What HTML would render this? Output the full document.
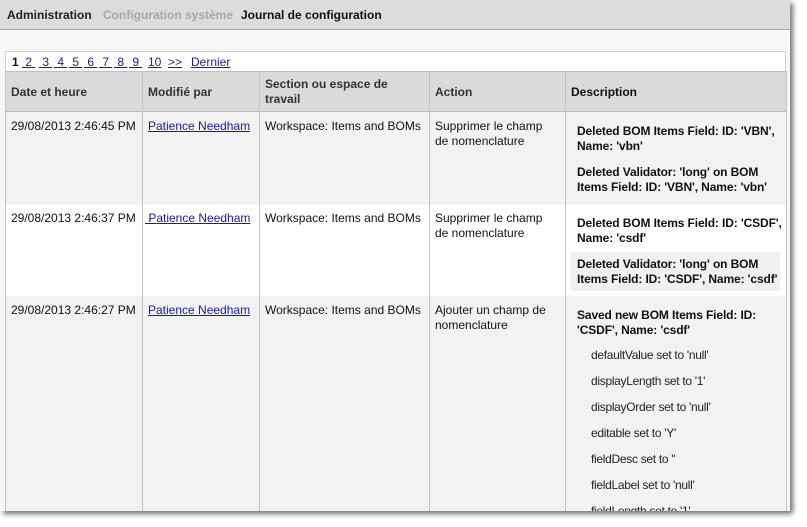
<!DOCTYPE html>
<html><head><meta charset="utf-8"><style>
*{margin:0;padding:0;box-sizing:border-box}
body{width:807px;height:527px;background:#fff;font-family:"Liberation Sans",Arial,sans-serif;font-size:12px;color:#111;position:relative;overflow:hidden}
.win{position:absolute;left:0;top:0;width:790px;height:511px;background:#f7f7f7;overflow:hidden;box-shadow:3px 3px 5px rgba(0,0,0,.55)}
.top{position:absolute;left:0;top:0;width:790px;height:30px;background:#dcdcdc;border-bottom:1px solid #a8a8a8}
.top span{position:absolute;top:8px;font-weight:bold;font-size:12px}
.a{position:absolute;white-space:nowrap}
a{color:#1a1aa6;text-decoration:underline}
.pg{position:absolute;left:5px;top:51px;width:781px;height:21px;background:#fff;border:1px solid #d0d0d0;border-bottom:none}
.hd{position:absolute;left:5px;top:71px;width:781px;height:41px;background:#dadada;border-top:1px solid #c0c0c0;border-bottom:1px solid #b8b8b8}
.row{position:absolute;left:5px;width:781px}
.vl{position:absolute;top:71px;bottom:0;width:1px;background:#c4c4c4}
.h{font-weight:bold;color:#333}
.b{font-weight:bold;line-height:15px;letter-spacing:-0.12px}
.s{font-size:12px;letter-spacing:-0.3px;color:#222}
.p{position:absolute;top:55px}
</style></head><body>
<div class="win">
<div class="top">
<span style="left:7px;color:#222">Administration</span>
<span style="left:103px;color:#a8a8a8">Configuration système</span>
<span style="left:241px;color:#111">Journal de configuration</span>
</div>
<div class="pg"></div>
<b class="p" style="left:12px">1</b>
<a class="p" style="left:22px">&nbsp;2&nbsp;</a>
<a class="p" style="left:39px">&nbsp;3&nbsp;</a>
<a class="p" style="left:54px">&nbsp;4&nbsp;</a>
<a class="p" style="left:69px">&nbsp;5&nbsp;</a>
<a class="p" style="left:84px">&nbsp;6&nbsp;</a>
<a class="p" style="left:99px">&nbsp;7&nbsp;</a>
<a class="p" style="left:114px">&nbsp;8&nbsp;</a>
<a class="p" style="left:129px">&nbsp;9&nbsp;</a>
<a class="p" style="left:148px">10</a>
<a class="p" style="left:168px">&gt;&gt;</a>
<a class="p" style="left:191px">Dernier</a>
<div class="hd"></div>
<div class="row" style="top:112px;height:93px;background:#f2f2f2"></div>
<div class="row" style="top:205px;height:91px;background:#fff"></div>
<div class="row" style="top:296px;height:215px;background:#f2f2f2"></div>
<div style="position:absolute;left:571px;top:252px;width:209px;height:39px;background:#f0f0f0"></div>
<div class="vl" style="left:5px"></div>
<div class="vl" style="left:142px"></div>
<div class="vl" style="left:259px"></div>
<div class="vl" style="left:429px"></div>
<div class="vl" style="left:565px"></div>
<div class="vl" style="left:786px"></div>

<div class="a h" style="left:11px;top:85px">Date et heure</div>
<div class="a h" style="left:148px;top:85px">Modifié par</div>
<div class="a h" style="left:265px;top:77px;line-height:15px">Section ou espace de<br>travail</div>
<div class="a h" style="left:435px;top:85px">Action</div>
<div class="a h" style="left:571px;top:85px;color:#111">Description</div>

<div class="a" style="left:11px;top:119px">29/08/2013 2:46:45 PM</div>
<div class="a" style="left:148px;top:119px"><a>Patience Needham</a></div>
<div class="a" style="left:265px;top:119px">Workspace: Items and BOMs</div>
<div class="a" style="left:435px;top:119px;line-height:15px">Supprimer le champ<br>de nomenclature</div>
<div class="a b" style="left:577px;top:124px">Deleted BOM Items Field: ID: 'VBN',<br>Name: 'vbn'</div>
<div class="a b" style="left:577px;top:165px">Deleted Validator: 'long' on BOM<br>Items Field: ID: 'VBN', Name: 'vbn'</div>

<div class="a" style="left:11px;top:211px">29/08/2013 2:46:37 PM</div>
<div class="a" style="left:145px;top:211px"><a>&nbsp;Patience Needham</a></div>
<div class="a" style="left:265px;top:211px">Workspace: Items and BOMs</div>
<div class="a" style="left:435px;top:211px;line-height:15px">Supprimer le champ<br>de nomenclature</div>
<div class="a b" style="left:577px;top:216px">Deleted BOM Items Field: ID: 'CSDF',<br>Name: 'csdf'</div>
<div class="a b" style="left:577px;top:257px">Deleted Validator: 'long' on BOM<br>Items Field: ID: 'CSDF', Name: 'csdf'</div>

<div class="a" style="left:11px;top:303px">29/08/2013 2:46:27 PM</div>
<div class="a" style="left:148px;top:303px"><a>Patience Needham</a></div>
<div class="a" style="left:265px;top:303px">Workspace: Items and BOMs</div>
<div class="a" style="left:435px;top:303px;line-height:15px">Ajouter un champ de<br>nomenclature</div>
<div class="a b" style="left:577px;top:308px">Saved new BOM Items Field: ID:<br>'CSDF', Name: 'csdf'</div>
<div class="a s" style="left:591px;top:348px">defaultValue set to 'null'</div>
<div class="a s" style="left:591px;top:374px">displayLength set to '1'</div>
<div class="a s" style="left:591px;top:400px">displayOrder set to 'null'</div>
<div class="a s" style="left:591px;top:426px">editable set to 'Y'</div>
<div class="a s" style="left:591px;top:452px">fieldDesc set to ''</div>
<div class="a s" style="left:591px;top:478px">fieldLabel set to 'null'</div>
<div class="a s" style="left:591px;top:504px">fieldLength set to '1'</div>
</div>
</body></html>
